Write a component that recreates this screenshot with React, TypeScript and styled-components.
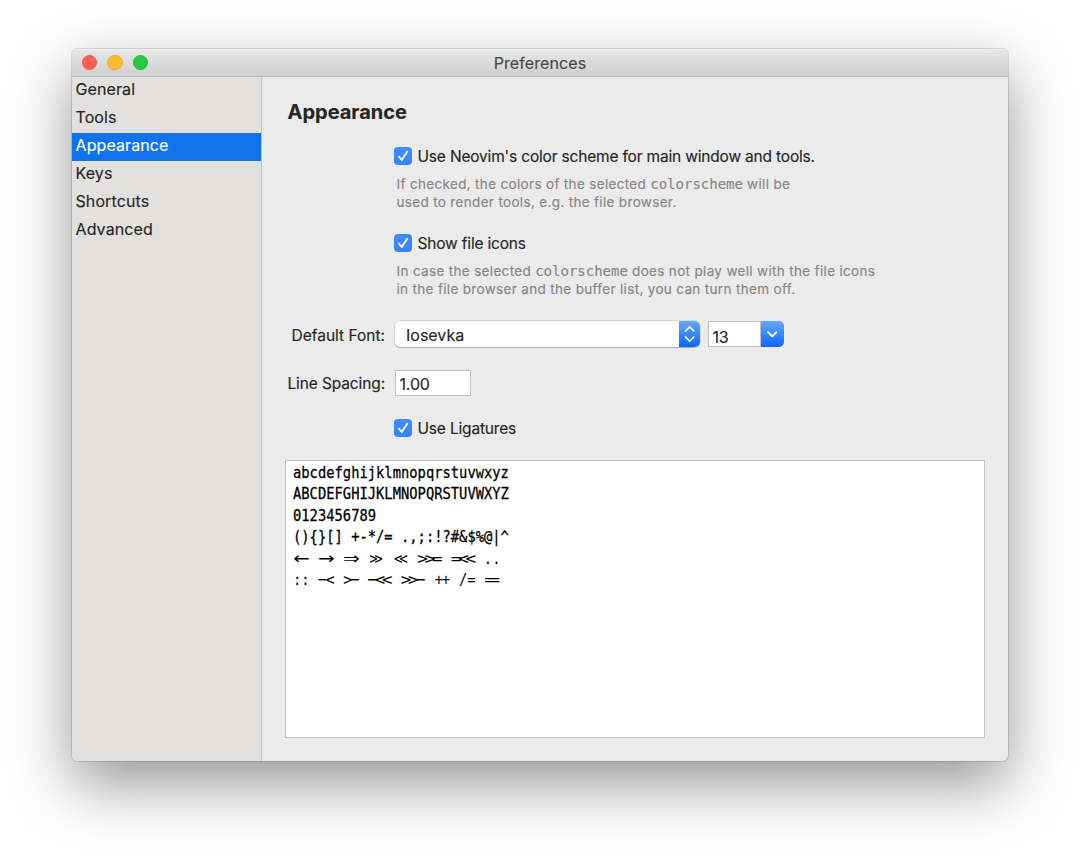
import React from 'react';
import styled, { createGlobalStyle } from 'styled-components';

const GlobalStyle = createGlobalStyle`
  * { box-sizing: border-box; }
  html, body { margin: 0; padding: 0; background: #fff; }
  body {
    font-family: Inter, "Liberation Sans", sans-serif;
    font-size: 16px;
    color: #262626;
    -webkit-text-stroke: 0.15px currentColor;
    overflow: hidden;
  }
`;

const Desktop = styled.div`
  width: 1080px;
  height: 856px;
  padding: 49px 72px 0;
  background: #fff;
`;

const Window = styled.div`
  width: 936px;
  height: 712px;
  border-radius: 6px;
  display: flex;
  flex-direction: column;
  overflow: hidden;
  background: #ebebeb;
  box-shadow: 0 0 0 1px rgba(0, 0, 0, 0.12), 0 23px 62px rgba(0, 0, 0, 0.42);
`;

const TitleBar = styled.header`
  height: 28px;
  flex: none;
  display: grid;
  grid-template-columns: 1fr auto 1fr;
  align-items: center;
  padding: 0 9px;
  background: linear-gradient(#e7e7e7, #cfcfcf);
  border-top: 1px solid #efefef;
  border-bottom: 1px solid #b5b5b5;
`;

const Lights = styled.div`
  display: flex;
  gap: 10px;
  padding: 0 0 1px 0.5px;
`;

const Light = styled.span<{ $fill: string; $edge: string }>`
  width: 15.5px;
  height: 15.5px;
  border-radius: 50%;
  background: ${(p) => p.$fill};
  border: 1px solid ${(p) => p.$edge};
`;

const Title = styled.h1`
  margin: 0 0 1px;
  font-size: 16px;
  font-weight: 400;
  letter-spacing: 0.1px;
  color: #474747;
`;

const Body = styled.div`
  flex: 1;
  display: flex;
`;

const Sidebar = styled.nav`
  width: 190px;
  flex: none;
  background: #e2e1df;
  border-right: 1px solid #c2c2c2;
`;

const NavItem = styled.div<{ $active?: boolean }>`
  height: 28px;
  padding-left: 3.5px;
  line-height: 24px;
  letter-spacing: 0.1px;
  color: ${(p) => (p.$active ? '#fff' : '#262626')};
  background: ${(p) => (p.$active ? '#1173ec' : 'transparent')};
`;

const Pane = styled.main`
  flex: 1;
  padding: 22px 23px 23px;
  display: flex;
  flex-direction: column;
`;

const Heading = styled.h2`
  margin: 0 0 0 2.5px;
  font-size: 20px;
  line-height: 26px;
  font-weight: 700;
`;

const Form = styled.div`
  display: flex;
  flex-direction: column;
  padding-top: 21px;
`;

const Row = styled.div<{ $top?: number }>`
  display: grid;
  grid-template-columns: 100px 1fr;
  column-gap: 9px;
  align-items: center;
  margin-top: ${(p) => p.$top ?? 0}px;
`;

const Label = styled.label<{ $lift?: boolean }>`
  text-align: right;
  font-size: 15.5px;
  line-height: 20px;
  letter-spacing: ${(p) => (p.$lift ? -0.12 : 0)}px;
  white-space: nowrap;
  padding-top: ${(p) => (p.$lift ? 1 : 3)}px;
`;

const CheckLine = styled.div`
  grid-column: 2;
  height: 20px;
  display: flex;
  align-items: center;
  gap: 5.5px;
  font-size: 15.5px;
  letter-spacing: -0.18px;
  white-space: nowrap;
`;

const Box = styled.span`
  width: 18px;
  height: 18px;
  margin-top: -1px;
  border-radius: 4px;
  background: linear-gradient(#3f8cfd, #3784fb);
  display: flex;
`;

const Hint = styled.p`
  grid-column: 2;
  margin: 9px 0 0 2.5px;
  font-size: 13.5px;
  line-height: 18px;
  letter-spacing: 0.33px;
  color: #868686;
  white-space: nowrap;
`;

const Code = styled.code`
  font-family: "DejaVu Sans Mono", monospace;
  font-size: 14px;
  line-height: 14px;
  letter-spacing: 0;
`;

const Controls = styled.div`
  display: flex;
  gap: 8px;
  padding-left: 1px;
`;

const Popup = styled.div`
  width: 305px;
  height: 26px;
  display: flex;
  justify-content: space-between;
  align-items: center;
  padding-left: 11px;
  background: #fff;
  border-radius: 5px;
  box-shadow: 0 0 0 0.5px rgba(0, 0, 0, 0.16), 0 1px 1px rgba(0, 0, 0, 0.2);
  overflow: hidden;
`;

const PopupText = styled.span`
  padding-top: 2px;
`;

const BlueCap = styled.span<{ $w: number }>`
  width: ${(p) => p.$w}px;
  height: 26px;
  flex: none;
  display: flex;
  border-radius: 0 5px 5px 0;
  background: linear-gradient(#68a7fa, #0a68fe);
`;

const Combo = styled.div`
  display: flex;
`;

const Field = styled.div<{ $w: number; $pad?: number }>`
  width: ${(p) => p.$w}px;
  height: 26px;
  padding: ${(p) => p.$pad ?? 5}px 0 0 3.5px;
  line-height: 20px;
  letter-spacing: -0.15px;
  background: #fff;
  border: 1px solid #c3c3c3;
`;

const Preview = styled.div`
  flex: 1;
  margin-top: 22px;
  padding: 0.5px 0 0 6.5px;
  background: #fff;
  border: 1px solid #c3c3c3;
  overflow: hidden;
`;

const Sample = styled.div`
  width: 400px;
  transform: scaleX(0.836);
  transform-origin: 0 0;
  font-family: "DejaVu Sans Mono", monospace;
  font-size: 16.5px;
  line-height: 21.5px;
  color: #000;
  -webkit-text-stroke: 0.3px #000;
  white-space: pre;
`;

const SampleLine = styled.div`
  height: 21.5px;
`;

const LigatureLine = styled.div`
  display: flex;
  gap: 9.93px;
  height: 21.5px;
  -webkit-text-stroke-width: 0;
`;

const Ligature = styled.span<{ $cells: number; $tight: number; $stretch: number; $arrow: boolean }>`
  width: ${(p) => p.$cells * 9.93}px;
  display: flex;
  justify-content: center;
  font-family: ${(p) => (p.$arrow ? '"DejaVu Sans"' : '"DejaVu Sans Mono"')}, monospace;
  letter-spacing: ${(p) => p.$tight}px;
  padding-right: ${(p) => -p.$tight}px;
  transform: scaleX(${(p) => p.$stretch});
`;

const Tick = () => (
  <svg width="18" height="18" viewBox="0 0 18 18" fill="none" aria-hidden="true">
    <path d="M4.9 9.7 7.7 13 13.2 4.8" stroke="#fff" strokeWidth="1.9" strokeLinecap="round" strokeLinejoin="round" />
  </svg>
);

const Check = ({ children }: { children: React.ReactNode }) => (
  <CheckLine>
    <Box><Tick /></Box>
    {children}
  </CheckLine>
);

const sections = ['General', 'Tools', 'Appearance', 'Keys', 'Shortcuts', 'Advanced'];

const glyphs = [
  'abcdefghijklmnopqrstuvwxyz',
  'ABCDEFGHIJKLMNOPQRSTUVWXYZ',
  '0123456789',
  '(){}[] +-*/= .,;:!?#&$%@|^',
];

type Lig = { t: string; n: number; tight?: number; stretch?: number; arrow?: boolean };

const ligatures: Lig[][] = [
  [
    { t: '←', n: 2, stretch: 1.45, arrow: true },
    { t: '→', n: 2, stretch: 1.45, arrow: true },
    { t: '⇒', n: 2, stretch: 1.45, arrow: true },
    { t: '>>', n: 2, tight: -3.5 },
    { t: '<<', n: 2, tight: -3.5 },
    { t: '>>=', n: 3, tight: -3, stretch: 1.28 },
    { t: '=<<', n: 3, tight: -3, stretch: 1.28 },
    { t: '..', n: 2 },
  ],
  [
    { t: '::', n: 2 },
    { t: '−<', n: 2, tight: -1.5, stretch: 1.08 },
    { t: '>−', n: 2, tight: -1.5, stretch: 1.08 },
    { t: '−<<', n: 3, tight: -3, stretch: 1.25 },
    { t: '>>−', n: 3, tight: -3, stretch: 1.25 },
    { t: '++', n: 2, tight: -1.5 },
    { t: '/=', n: 2 },
    { t: '==', n: 2, tight: -1.5 },
  ],
];

export default function App() {
  return (
    <Desktop>
      <GlobalStyle />
      <Window>
        <TitleBar>
          <Lights>
            <Light $fill="#ff5f57" $edge="#ee544c" />
            <Light $fill="#febc2e" $edge="#eeae27" />
            <Light $fill="#28c840" $edge="#20b838" />
          </Lights>
          <Title>Preferences</Title>
        </TitleBar>
        <Body>
          <Sidebar>
            {sections.map((s) => (
              <NavItem key={s} $active={s === 'Appearance'}>{s}</NavItem>
            ))}
          </Sidebar>
          <Pane>
            <Heading>Appearance</Heading>
            <Form>
              <Row>
                <Check>Use Neovim's color scheme for main window and tools.</Check>
                <Hint>
                  If checked, the colors of the selected <Code>colorscheme</Code> will be<br />
                  used to render tools, e.g. the file browser.
                </Hint>
              </Row>
              <Row $top={22}>
                <Check>Show file icons</Check>
                <Hint>
                  In case the selected <Code>colorscheme</Code> does not play well with the file icons<br />
                  in the file browser and the buffer list, you can turn them off.
                </Hint>
              </Row>
              <Row $top={23}>
                <Label>Default Font:</Label>
                <Controls>
                  <Popup>
                    <PopupText>Iosevka</PopupText>
                    <BlueCap $w={21}>
                      <svg width="21" height="26" viewBox="0 0 21 26" fill="none" aria-hidden="true">
                        <path d="M6.6 10 10.7 5.9 14.8 10M6.6 16 10.7 20.1 14.8 16" stroke="#fff" strokeWidth="1.7" strokeLinecap="round" strokeLinejoin="round" />
                      </svg>
                    </BlueCap>
                  </Popup>
                  <Combo>
                    <Field $w={53}>13</Field>
                    <BlueCap $w={23}>
                      <svg width="23" height="26" viewBox="0 0 23 26" fill="none" aria-hidden="true">
                        <path d="M7 11.2 11.2 15.4 15.4 11.2" stroke="#fff" strokeWidth="1.9" strokeLinecap="round" strokeLinejoin="round" />
                      </svg>
                    </BlueCap>
                  </Combo>
                </Controls>
              </Row>
              <Row $top={23}>
                <Label $lift>Line Spacing:</Label>
                <Controls>
                  <Field $w={76} $pad={3}>1.00</Field>
                </Controls>
              </Row>
              <Row $top={22}>
                <Check>Use Ligatures</Check>
              </Row>
            </Form>
            <Preview>
              <Sample>
                {glyphs.map((g) => (
                  <SampleLine key={g}>{g}</SampleLine>
                ))}
                {ligatures.map((row, i) => (
                  <LigatureLine key={i}>
                    {row.map((l) => (
                      <Ligature key={l.t} $cells={l.n} $tight={l.tight ?? 0} $stretch={l.stretch ?? 1} $arrow={!!l.arrow}>{l.t}</Ligature>
                    ))}
                  </LigatureLine>
                ))}
              </Sample>
            </Preview>
          </Pane>
        </Body>
      </Window>
    </Desktop>
  );
}
